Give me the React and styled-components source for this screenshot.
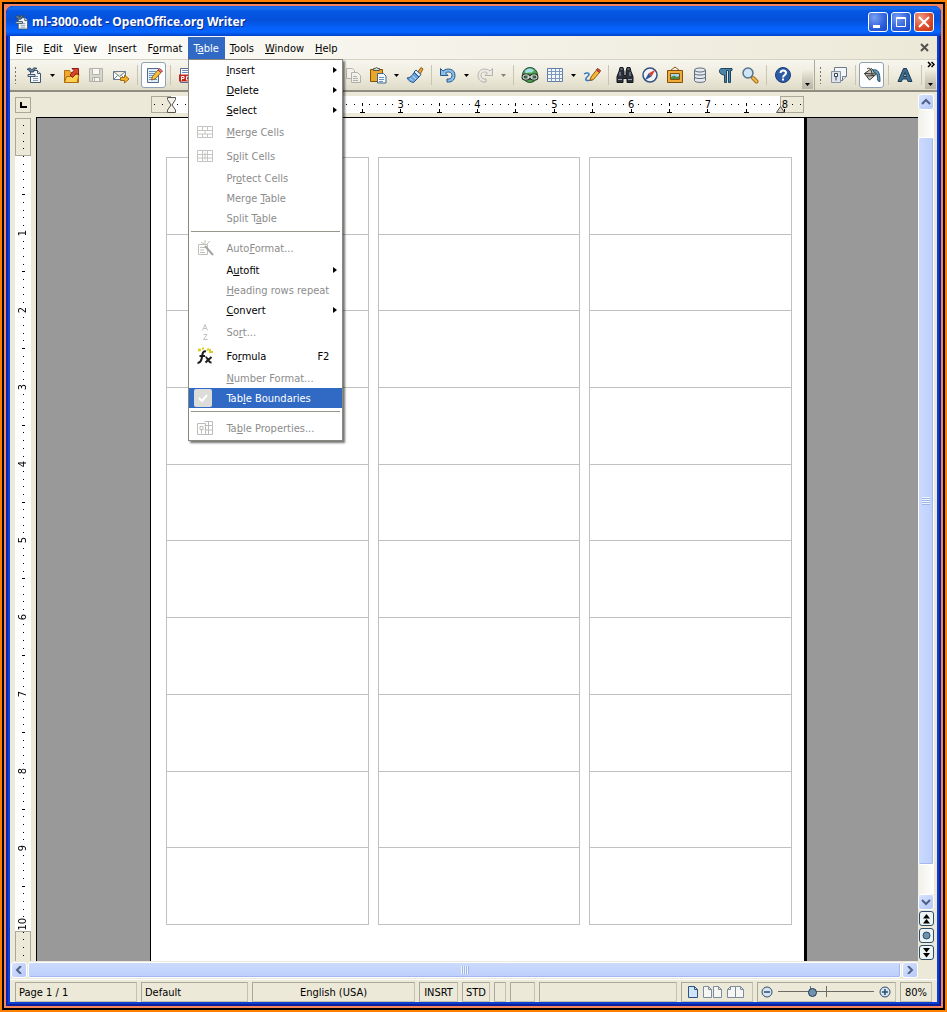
import React, { useState } from 'react'
import styled, { createGlobalStyle, css } from 'styled-components'

const UI_FONT = '"DejaVu Sans Condensed", "DejaVu Sans", sans-serif'
const FACE = '#ece9d8'
const LINE = '#aca899'

const GlobalStyle = createGlobalStyle`
    * { box-sizing: border-box; }
    body {
        margin: 0;
        background: #ff8000;
        font-family: ${UI_FONT};
        font-size: 11px;
        color: #000;
    }
    button, input { font: inherit; color: inherit; padding: 0; margin: 0; border: 0; background: none; }
    svg { display: block; }
`

// ---------- window frame ----------
const Frame = styled.div`
    height: 100vh;
    border: 2px solid #ff8000;
    background: #000;
    padding: 2px;
    display: flex;
`
const Desktop = styled.div`
    flex: 1;
    min-width: 0;
    padding: 2px;
    background: #f4845c;
    display: flex;
`
const Window = styled.div`
    flex: 1;
    min-width: 0;
    display: flex;
    flex-direction: column;
    background: #0a3fd0;
    border-radius: 7px 7px 0 0;
    padding: 0 4px 4px;
    box-shadow: inset 2px 0 #0a24b4, inset -2px 0 #0a1f9c, inset 0 -2px #0a1f9c;
`
const TitleBar = styled.header`
    height: 30px;
    flex: none;
    margin: 0 -4px;
    padding: 2px 7px 0 8px;
    border-radius: 7px 7px 0 0;
    display: flex;
    align-items: center;
    gap: 3px;
    background: linear-gradient(#0a5ae0 0, #1a70f0 2px, #0558e4 5px, #0450da 14px, #0560fa 22px, #0566ff 26px, #0440c8 30px);
`
const Title = styled.h1`
    flex: 1;
    margin: 0;
    font-family: "Noto Sans", "Open Sans", sans-serif;
    font-size: 12px;
    line-height: 16px;
    font-weight: bold;
    color: #fff;
    text-shadow: 1px 1px #0a2a8c;
    white-space: nowrap;
`
const CaptionButton = styled.button`
    width: 20px;
    height: 20px;
    border: 1px solid #fff;
    border-radius: 3px;
    background: ${(p) => p.$close
        ? 'radial-gradient(circle at 30% 25%, #ef9a80, #d8492a 60%, #b83414)'
        : 'radial-gradient(circle at 30% 25%, #7a9ff0, #2c60dc 60%, #1a48c0)'};
`

// ---------- menu bar ----------
const Client = styled.div`
    flex: 1;
    min-height: 0;
    display: flex;
    flex-direction: column;
    background: ${FACE};
`
const MenuBar = styled.nav`
    height: 24px;
    flex: none;
    padding: 1px 7px 0 1px;
    display: flex;
    background: linear-gradient(to right, #fdfdfb, #f4f2e8 50%, ${FACE});
    border-bottom: 1px solid #d6d2c2;
`
const MenuSlot = styled.div`
    position: relative;
    display: flex;
`
const MenuTitle = styled.button`
    height: 22px;
    padding: 0 6px 0 5px;
    white-space: nowrap;
    ${(p) => p.$open && css`
        background: #316ac5;
        color: #fff;
    `}
`
const CloseDoc = styled.button`
    margin-left: auto;
    width: 10px;
`
const Popup = styled.div`
    position: absolute;
    z-index: 5;
    top: 22px;
    left: 0;
    width: 155px;
    border: 1px solid #8a877c;
    background: #fff;
    box-shadow: 2px 2px 2px rgba(0, 0, 0, 0.55);
`
const PopupItem = styled.button`
    width: 100%;
    height: ${(p) => (p.$tall ? 24 : 20)}px;
    padding-right: 5px;
    display: grid;
    grid-template-columns: 37px 1fr auto;
    align-items: center;
    text-align: left;
    white-space: nowrap;
    color: ${(p) => (p.$off ? '#8c8c8c' : '#000')};
    ${(p) => p.$active && css`
        background: #316ac5;
        color: #fff;
    `}
`
const ItemIcon = styled.span`
    padding-left: 7px;
`
const CheckMark = styled.span`
    display: flex;
    align-items: center;
    justify-content: center;
    width: 18px;
    height: 18px;
    margin-left: 5px;
    border-radius: 2px;
    background: #dcdcd8;
`
const Shortcut = styled.span`
    padding-right: 8px;
`
const PopupRule = styled.hr`
    height: 8px;
    margin: 0 2px;
    border: 0;
    background: linear-gradient(#98968a, #98968a) 0 3px / 100% 1px no-repeat;
`

// ---------- toolbars ----------
const ToolBars = styled.div`
    height: 32px;
    flex: none;
    display: flex;
    border-bottom: 2px solid #8f8c80;
    background: linear-gradient(#f7f6ef, #efecde 50%, #dfdbc8);
`
const ToolBar = styled.div`
    display: flex;
    align-items: center;
    flex: ${(p) => (p.$grow ? '1 0 auto' : 'none')};
    border-left: ${(p) => (p.$edge ? `1px solid ${LINE}` : '0')};
`
const Grip = styled.span`
    width: 11px;
    height: 18px;
    background: radial-gradient(circle, #77746a 1px, transparent 1px) 4px 0 / 3px 4px repeat-y;
`
const ToolButton = styled.button`
    width: 25px;
    height: 26px;
    display: flex;
    align-items: center;
    justify-content: center;
    ${(p) => p.$on && css`
        border: 1px solid #8fa3b4;
        border-radius: 3px;
        background: #fff;
    `}
    ${(p) => p.$off && css`
        opacity: 0.6;
        filter: grayscale(1);
    `}
`
const DropButton = styled.button`
    width: 12px;
    height: 26px;
    display: flex;
    align-items: center;
    justify-content: center;
    opacity: ${(p) => (p.$off ? 0.45 : 1)};
`
const Divider = styled.span`
    width: 8px;
    height: 20px;
    background: linear-gradient(#c9c5b4, #c9c5b4) center / 1px 100% no-repeat;
`
const Covered = styled.span`
    width: 141px;
`
const Overflow = styled.button`
    width: 11px;
    height: 28px;
    margin: 0 1px 0 auto;
    padding-bottom: 3px;
    display: flex;
    flex-direction: column;
    align-items: center;
    justify-content: ${(p) => (p.$more ? 'space-between' : 'flex-end')};
    background: linear-gradient(transparent 30%, #b9b6a8);
`

// ---------- rulers and page ----------
const Workspace = styled.div`
    flex: 1;
    min-height: 0;
    display: flex;
`
const Editor = styled.main`
    flex: 1;
    min-width: 0;
    display: flex;
    flex-direction: column;
`
const RulerRow = styled.div`
    height: 25px;
    flex: none;
    display: flex;
    align-items: center;
    padding-left: 5px;
`
const TabButton = styled.button`
    width: 16px;
    height: 16px;
    margin-right: 6px;
    display: flex;
    align-items: center;
    justify-content: center;
    border: 1px solid ${LINE};
`
const RulerCenter = styled.div`
    flex: 1;
    display: flex;
    justify-content: center;
`
const HRuler = styled.div`
    position: relative;
    width: 653px;
    height: 17px;
    display: grid;
    grid-template-columns: repeat(85, 1fr);
    background: linear-gradient(to right, transparent 20px, #fff 20px, #fff calc(100% - 24px), transparent 0);
`
const VRulerBox = styled.div`
    width: 26px;
    flex: none;
    padding: 1px 0 0 5px;
    overflow: hidden;
`
const VRuler = styled.div`
    position: relative;
    width: 16px;
    height: 841px;
    padding-top: 4px;
    display: grid;
    grid-template-rows: repeat(109, 1fr);
    background: linear-gradient(transparent 38px, #fff 38px, #fff 813px, transparent 0);
`
const Margin = styled.span`
    position: absolute;
    border: 1px solid ${LINE};
    ${(p) => p.$side === 'left' && 'left: 0; top: 0; bottom: 0; width: 20px;'}
    ${(p) => p.$side === 'right' && 'right: 0; top: 0; bottom: 0; width: 24px;'}
    ${(p) => p.$side === 'top' && 'left: 0; right: 0; top: 0; height: 38px;'}
    ${(p) => p.$side === 'bottom' && 'left: 0; right: 0; top: 813px; bottom: -10px;'}
`
const Indent = styled.span`
    position: absolute;
    bottom: 0;
    ${(p) => (p.$right ? 'right: 19px' : 'left: 15px')};
`
const Tick = styled.span`
    min-width: 0;
    min-height: 0;
    display: flex;
    align-items: center;
    justify-content: center;
    line-height: 14px;
    ${(p) => p.$tab && css`
        background:
            linear-gradient(#000, #000) center bottom / 5px 1px no-repeat,
            linear-gradient(#000, #000) center bottom / 1px 4px no-repeat;
    `}
    &::before {
        content: ${(p) => (p.$label ? 'none' : '""')};
        width: ${(p) => (p.$half && p.$vertical ? 3 : 1)}px;
        height: ${(p) => (p.$half && !p.$vertical ? 3 : 1)}px;
        background: #000;
    }
`
const VLabel = styled.span`
    writing-mode: vertical-rl;
    transform: rotate(180deg);
`
const Body = styled.div`
    flex: 1;
    min-height: 0;
    display: flex;
`
const Canvas = styled.div`
    flex: 1;
    min-width: 0;
    display: flex;
    justify-content: center;
    overflow: hidden;
    border: solid #000;
    border-width: 1px 0 0 1px;
    background: #999;
`
const Page = styled.article`
    width: 653px;
    flex: none;
    padding: 39px 12px 0 15px;
    background: #fff;
    box-shadow: -1px 0 #000, 3px 0 #000;
`
const LabelSheet = styled.div`
    height: 768px;
    display: grid;
    grid-template-columns: repeat(3, 1fr);
    gap: 9px;
`
const LabelColumn = styled.div`
    display: grid;
    grid-template-rows: repeat(10, 1fr);
    border: solid #c0c0c0;
    border-width: 1px 1px 0;
`
const LabelCell = styled.div`
    border-bottom: 1px solid #c0c0c0;
`

// ---------- scroll bars ----------
const VScroll = styled.div`
    width: 19px;
    flex: none;
    padding: 2px 3px 0 0;
    display: flex;
    flex-direction: column;
`
const ScrollButton = styled.button`
    width: 16px;
    height: 16px;
    flex: none;
    display: flex;
    align-items: center;
    justify-content: center;
    border: 1px solid #fff;
    border-radius: 3px;
    background: linear-gradient(135deg, #d6e2fe, #b6c8f8);
`
const PageButton = styled.button`
    width: 15px;
    height: 15px;
    margin: 1px 0 1px 1px;
    flex: none;
    display: flex;
    align-items: center;
    justify-content: center;
    border: 1px solid #2c4c6c;
    border-radius: 3px;
    background: #eef3f4;
`
const VTrough = styled.div`
    flex: 1;
    padding: 27px 0 29px;
    display: flex;
    background: linear-gradient(to right, #f1f0ea, #fefefc);
`
const HTrough = styled.div`
    flex: 1;
    display: flex;
    padding: 0 1px;
`
const Thumb = styled.div`
    flex: 1;
    display: flex;
    align-items: center;
    justify-content: center;
    border: 1px solid #fff;
    border-radius: 2px;
    box-shadow: inset -1px -1px #a3b8ee;
    background: linear-gradient(${(p) => (p.$vertical ? 'to right' : 'to bottom')}, #cbdafe, #bccffb);
`
const Ridges = styled.span`
    width: 8px;
    height: 8px;
    background: repeating-linear-gradient(${(p) => (p.$vertical ? 'to bottom' : 'to right')}, #eef4fe 0 1px, #a0b6e8 1px 2px);
`
const HScroll = styled.div`
    height: 18px;
    flex: none;
    padding: 1px 19px 1px 1px;
    display: flex;
`

// ---------- status bar ----------
const StatusBar = styled.footer`
    height: 23px;
    flex: none;
    border-top: 1px solid #fff;
    padding: 2px 5px 1px;
    display: flex;
    gap: 4px;
`
const StatusCell = styled.div`
    flex: ${(p) => (p.$grow ? '1 1' : '0 0')} ${(p) => p.$w}px;
    min-width: 0;
    height: 20px;
    padding: ${(p) => (p.$center ? 0 : '0 4px 0 3px')};
    display: flex;
    align-items: center;
    justify-content: ${(p) => (p.$center ? 'center' : 'flex-start')};
    gap: 5px;
    white-space: nowrap;
    border: 1px solid ${LINE};
    border-right-color: #c5c1b0;
    border-bottom-color: #c5c1b0;
`
const ViewButton = styled.button`
    flex: none;
`
const ZoomSlider = styled.input`
    appearance: none;
    flex: 1;
    min-width: 0;
    height: 14px;
    background:
        linear-gradient(#6c6c64, #6c6c64) 50% 1px / 1px 11px no-repeat,
        linear-gradient(#6c6c64, #6c6c64) 34% 1px / 1px 5px no-repeat,
        linear-gradient(#6c6c64, #6c6c64) 0 6px / 100% 1px no-repeat;
    &::-webkit-slider-thumb {
        appearance: none;
        width: 9px;
        height: 9px;
        border: 1px solid #1c3a58;
        border-radius: 50%;
        background: #6f93ad;
    }
`

// ---------- icons ----------
const ICONS = {
    newDoc: (
        <g stroke="#3f566b">
            <path fill="#f4f8fc" d="M5.500 4.500h7l3 3v9h-10z" />
            <path fill="#dce6ee" d="M12.500 4.500v3h3" />
            <path stroke="#8c9cac" d="M8 10.500h5M8 12.500h5M8 14.500h5" />
            <path fill="#d4e0ea" d="M3 8.500h7v2h-7z" />
            <path fill="#5f7f9c" stroke="#34485c" d="M2 3.500c2-2 4-1.500 5 .5 1-2.500 3-2.500 5-1.500-2 0-3 1.500-3.500 3.500H5c-.5-1.500-1.500-2.500-3-2.500z" />
        </g>
    ),
    open: (
        <g stroke="#b06c10">
            <path fill="#f3a82c" d="M2.500 4.500h5l1 2h8v10h-14z" />
            <path fill="#fbd050" d="M2.500 16.500l2-6h6l2-2h4.500l-2 8z" />
            <path fill="#d8452c" stroke="#8c2010" d="M8 9l4-4.500-2-2h6.500v6.500l-2-2-4 4.500z" />
        </g>
    ),
    save: (
        <g stroke="#8b8b85">
            <path fill="#c9c9c4" d="M2.500 2.500h13v13h-13z" />
            <path fill="#fff" d="M5.500 2.500h7v6h-7zM5.500 11.500h7v4h-7z" />
            <path d="M7.500 12v3" />
        </g>
    ),
    mail: (
        <g>
            <path fill="#fff" stroke="#6c7c8c" d="M1.500 5.500h12v8h-12zM1.500 5.500l6 5 6-5M1.500 13.500l4-4M13.500 13.500l-4-4" />
            <path fill="#f5b32c" stroke="#a46c10" d="M8.500 11.500h4v-2.500l4.500 4-4.500 4v-2.500h-4z" />
        </g>
    ),
    edit: (
        <g>
            <path fill="#e3eefa" stroke="#4c6c94" d="M2.500 2.500h11v14h-11z" />
            <path stroke="#6c94bc" d="M4 5.500h7M4 7.500h6M4 9.500h5M4 11.500h4M4 13.500h8" />
            <path fill="#f7c240" stroke="#96641c" d="M13 4l3 2.500-6 6.500-3.500 1 1-3.500z" />
            <path fill="#e87c84" stroke="#a43c3c" d="M13 4l1.500-1.500 3 2.500-1.500 1.500z" />
        </g>
    ),
    pdf: (
        <g>
            <path fill="#fff" stroke="#5c6c8c" d="M2.500 2.500h9l4 4v10h-13z" />
            <path stroke="#6c8cbc" d="M4 4.500h6M4 6.500h8" />
            <path fill="#c4281c" d="M1 8.500h16v7H1z" />
            <path stroke="#fff" fill="none" d="M3.500 14.500v-4h2.500v2h-2.500M8.500 10.500v3.500h2v-3zM13.500 14.500v-4h2.500M13.500 12.500h2" />
        </g>
    ),
    copy: (
        <g fill="#f4f4f0" stroke="#8c8c88">
            <path d="M2.500 2.500h6l2 2v8h-8z" />
            <path d="M7.500 6.500h6l3 3v7h-9z" />
            <path d="M9 10.500h4M9 12.500h5M9 14.500h5" />
        </g>
    ),
    paste: (
        <g>
            <path fill="#eaa628" stroke="#84500c" d="M1.500 3.500h12v12h-12z" />
            <path fill="#d8d8d0" stroke="#54544c" d="M4.500 4.500h6v-2h-1.500l-1.500-1-1.500 1h-1.500z" />
            <path fill="#f4f8fc" stroke="#44688c" d="M8.500 7.500h6l2.500 2.500v7h-8.500z" />
            <path stroke="#6c94bc" d="M10 11.500h5M10 13.500h5M10 15.500h4" />
        </g>
    ),
    brush: (
        <g>
            <path fill="#f3a638" stroke="#90580c" d="M11.500 6.500l3.500-5 2 1.500-3 5.500z" />
            <path fill="#6ca4e0" stroke="#24548c" d="M8 6.500l5 4.500-5.500 5.500c-3-.5-5-2-6.500-4.500 3 0 5-2 7-5.500z" />
            <path stroke="#cce4fa" d="M4 12.500l2.500 2M6.500 10l3.500 3" />
            <path fill="#d8ecfc" stroke="#24548c" d="M8 6l2-2 5 4.500-2 2.500z" />
        </g>
    ),
    undo: (
        <path fill="#8cbce8" stroke="#24588c" d="M1.500 2.500l2.500 2.500c4-3.500 12-2.500 12 4.500 0 5-4 7-8 6.500v-3c3 .5 5-1 5-3.500 0-4-4.500-4-6.500-2.500l2.500 2.500h-7.500z" />
    ),
    redo: (
        <path fill="#e8e8e4" stroke="#8c8c88" d="M16.500 2.500l-2.500 2.500c-4-3.500-12-2.500-12 4.500 0 5 4 7 8 6.500v-3c-3 .5-5-1-5-3.500 0-4 4.500-4 6.500-2.500l-2.500 2.500h7.500z" />
    ),
    globe: (
        <g>
            <circle cx="9" cy="9" r="7.500" fill="#4fa848" stroke="#1f4c3c" />
            <path fill="#a4dcf0" d="M4 5c2-3 6-3.500 9-1l-2 2.500H7L5 8z" />
            <rect x="2" y="9" width="6" height="4" rx="2" stroke="#24342c" strokeWidth="3" />
            <rect x="10" y="9" width="6" height="4" rx="2" stroke="#24342c" strokeWidth="3" />
            <rect x="2" y="9" width="6" height="4" rx="2" stroke="#f0f4f0" />
            <rect x="10" y="9" width="6" height="4" rx="2" stroke="#f0f4f0" />
            <path stroke="#f0f4f0" d="M6 11h6" />
        </g>
    ),
    table: (
        <g stroke="#7c98bc">
            <path fill="#f4f8fd" stroke="#5c7ca4" d="M1.500 2.500h15v13h-15z" />
            <path d="M1.500 5.500h15M1.500 8.500h15M1.500 12.500h15M5.500 2.500v13M9.500 2.500v13M13.500 2.500v13" />
        </g>
    ),
    draw: (
        <g>
            <path fill="none" stroke="#3474c4" strokeWidth="1.500" d="M1 8c3-2 7-1 4 2-3 2.500-3 4.500 0 4.500 2 0 3-1 4.500-.5" />
            <path fill="#f7b838" stroke="#905c14" d="M13.500 4l3 2.500-6 7-3.500 1 1-3.500z" />
            <path fill="#e0584c" stroke="#90281c" d="M13.500 4l1-1.500 3 2-1 2z" />
        </g>
    ),
    binoculars: (
        <g fill="#2c3038" stroke="#14181c">
            <path d="M3 5.500l1-4h3l1 4v4h2v-4l1-4h3l1 4 2 5v6h-6v-4H7v4H1v-6z" />
            <path stroke="#94a4b8" d="M4 6v4M14 6v4M2 13.500h4M12 13.500h4M4.500 3h2M11.500 3h2" />
        </g>
    ),
    compass: (
        <g>
            <circle cx="9" cy="9" r="7" fill="#f0f4fa" stroke="#34507c" strokeWidth="1.500" />
            <path fill="#d8402c" d="M14.500 3.500l-4 7-3-3z" />
            <path fill="#2c5490" d="M3.500 14.500l4-7 3 3z" />
        </g>
    ),
    gallery: (
        <g>
            <path stroke="#8c5c14" fill="none" d="M5 4l4-3 4 3" />
            <path fill="#f0ac38" stroke="#84500c" d="M1.500 4.500h15v12h-15z" />
            <path fill="#a8d8f0" stroke="#84500c" d="M4.500 7.500h9v6h-9z" />
            <path fill="#4c8c4c" d="M5 13v-2l3-1.500 3 1.500 2-1v3z" />
        </g>
    ),
    database: (
        <g fill="#e6eaee" stroke="#5c6c7c">
            <path d="M3.500 4v10.500c0 2.500 11 2.500 11 0V4" />
            <path fill="none" d="M3.500 7.500c0 2 11 2 11 0M3.500 11c0 2 11 2 11 0" />
            <ellipse cx="9" cy="4" rx="5.500" ry="2" />
        </g>
    ),
    pilcrow: (
        <path fill="#4c84a8" stroke="#1c4464" d="M6 2.500h10v2h-1.500v12h-2v-12h-2v12h-2v-7.500c-6 0-6.500-6.500-2.500-6.500z" />
    ),
    zoom: (
        <g>
            <path stroke="#a4701c" strokeWidth="4" strokeLinecap="round" d="M12 12l3.500 3.500" />
            <path stroke="#f3bc4c" strokeWidth="2" strokeLinecap="round" d="M12 12l3.500 3.500" />
            <circle cx="7" cy="7" r="5" fill="#cfe4f4" stroke="#54748c" strokeWidth="1.500" />
        </g>
    ),
    help: (
        <g>
            <circle cx="9" cy="9" r="7.500" fill="#2c5ca8" stroke="#1c3c70" />
            <path fill="none" stroke="#fff" strokeWidth="2" d="M6.500 7c0-3.500 5.500-3 5.500 0 0 2-3 2-3 4.500M9 12.500v2" />
        </g>
    ),
    styles: (
        <g>
            <path fill="#f4f6f8" stroke="#6c7c8c" d="M4.500 1.500h12v9l-4 4h-8z" />
            <path stroke="#6c7c8c" fill="#dce2e8" d="M12.500 14.500v-4h4" />
            <path fill="#e0e4ea" stroke="#8494a4" d="M1.500 5.500h9v11h-9z" />
            <path fill="#fff" stroke="#34485c" d="M4.500 7.500h3v3h-3zM6 10.500v4" />
        </g>
    ),
    bucket: (
        <g>
            <path fill="#c4c4bc" stroke="#34342c" d="M1.500 7.500l7-5 5 5.500-7 6z" />
            <path fill="none" stroke="#34342c" d="M4 3c2-2 5 0 5 6M1.500 7.500l11 .5M4 10l7-.5" />
            <path fill="#5c94b4" stroke="#245070" d="M10 4c5-1 7 2 7 11.500-2 0-2.500-1-2.500-3 0-4-1-5.500-3.500-6z" />
        </g>
    ),
    fontColor: (
        <path fill="#3c6c90" fillRule="evenodd" stroke="#1c3c54" d="M7.500 2.500h3l5.500 13h-4l-1-2.500h-4.500l-1 2.500h-3.500zM9 6.500l-1.500 4h3z" />
    ),
    mergeCells: (
        <g fill="none" stroke="#c4c4c0">
            <path d="M1.500 3.500h15v11h-15zM1.500 7.500h15M1.500 11h15M6.500 3.500v4M11.500 3.500v4M6.500 11v3.500M11.500 11v3.500M9 7.500v3.500" />
        </g>
    ),
    splitCells: (
        <g fill="none" stroke="#c4c4c0">
            <path d="M1.500 3.500h15v11h-15zM1.500 7.500h15M1.500 11h15M6.500 3.500v11M11.500 3.500v11M9 5.500v7" />
        </g>
    ),
    autoFormat: (
        <g fill="none" stroke="#c0c0bc">
            <path d="M2.500 5.500h9v10h-9zM4 8.500h5M4 11h4M4 13.500h5M9 1v4M5 3l3 2M14 2l-3 3" />
            <path stroke="#a4a4a0" strokeWidth="2" d="M9 7l8 9" />
        </g>
    ),
    sort: (
        <g fill="none" stroke="#c0c0bc">
            <path d="M6.500 7.500l2.500-6 2.500 6M7.500 5.500h3M7.500 11.500h3.500l-3.500 5h4" />
        </g>
    ),
    formula: (
        <g fill="none" stroke="#1c1c1c" strokeWidth="2">
            <path stroke="#d8d020" d="M2 3h3M3.500 1.500v3M6 1.500h2M11 3l2-1M14 2v3M13 5h4" />
            <path d="M10 4.500c-3-1-3.500 2-4 5.500S4 16.500 1.500 15.500M3.500 9h5.500M9.500 10c2 0 3 6 6 5.500M15.500 10l-6 5.500" />
        </g>
    ),
    tableProps: (
        <g fill="none" stroke="#bcbcb8">
            <path d="M8.500 2.500h8v13h-8M8.500 6.500h8M8.500 11h8M12.500 2.500v13M1.500 4.500h8v11h-8zM4 7.500h3v3h-3zM5.500 10.500v4" />
        </g>
    ),
}

function Icon({ name }) {
    return (
        <svg width="18" height="18" viewBox="0 0 18 18" fill="none" aria-hidden="true">
            {ICONS[name]}
        </svg>
    )
}

const CHEVRONS = {
    up: 'M1 6l4-4 4 4',
    down: 'M1 2l4 4 4-4',
    left: 'M7 0L3 4l4 4',
    right: 'M3 0l4 4-4 4',
}

function Chevron({ dir }) {
    return (
        <svg width="10" height="8" viewBox="0 0 10 8">
            <path d={CHEVRONS[dir]} fill="none" stroke="#4d6185" strokeWidth="2" />
        </svg>
    )
}

function DownArrow() {
    return <svg width="5" height="3" viewBox="0 0 5 3"><path d="M0 0h5L2.500 3z" /></svg>
}

// the letter after "&" is the underlined access key
function Mnemonic({ text }) {
    const at = text.indexOf('&')
    if (at < 0) return text
    return <>{text.slice(0, at)}<u>{text[at + 1]}</u>{text.slice(at + 2)}</>
}

const MENUS = ['&File', '&Edit', '&View', '&Insert', 'F&ormat', 'T&able', '&Tools', '&Window', '&Help']

const TABLE_MENU = [
    { label: '&Insert', sub: true },
    { label: '&Delete', sub: true },
    { label: '&Select', sub: true },
    { label: '&Merge Cells', icon: 'mergeCells', off: true },
    { label: 'S&plit Cells', icon: 'splitCells', off: true },
    { label: 'Pr&otect Cells', off: true },
    { label: 'Merge &Table', off: true },
    { label: 'Split T&able', off: true },
    null,
    { label: 'Auto&Format...', icon: 'autoFormat', off: true },
    { label: 'A&utofit', sub: true },
    { label: '&Heading rows repeat', off: true },
    { label: '&Convert', sub: true },
    { label: 'So&rt...', icon: 'sort', off: true },
    { label: 'Fo&rmula', icon: 'formula', keys: 'F2' },
    { label: '&Number Format...', off: true },
    { label: 'Tab&le Boundaries', checked: true },
    null,
    { label: 'Ta&ble Properties...', icon: 'tableProps', off: true },
]

function TableMenu() {
    return (
        <Popup role="menu">
            {TABLE_MENU.map((item, key) => item === null ? <PopupRule key={key} /> : (
                <PopupItem key={key} role="menuitem" $tall={!!item.icon} $off={item.off} $active={item.checked}>
                    {item.checked ? (
                        <CheckMark>
                            <svg width="10" height="9" viewBox="0 0 10 9"><path d="M1 4l3 3 5-6" fill="none" stroke="#fff" strokeWidth="2" /></svg>
                        </CheckMark>
                    ) : <ItemIcon>{item.icon && <Icon name={item.icon} />}</ItemIcon>}
                    <span><Mnemonic text={item.label} /></span>
                    {item.sub && <svg width="4" height="6" viewBox="0 0 4 6"><path d="M0 0l4 3-4 3z" /></svg>}
                    {item.keys && <Shortcut>{item.keys}</Shortcut>}
                </PopupItem>
            ))}
        </Popup>
    )
}

const STANDARD_TOOLS = [
    'newDoc', 'v', 'open', 'save:off', 'mail', '|', 'edit:on', '|', 'pdf', 'gap', 'copy:off', 'paste', 'v', 'brush', '|',
    'undo', 'v', 'redo:off', 'v:off', '|', 'globe', 'table', 'v', 'draw', '|',
    'binoculars', 'compass', 'gallery', 'database', 'pilcrow', 'zoom', '|', 'help',
]
const EXTRA_TOOLS = ['styles', '|', 'bucket:on', '|', 'fontColor', '|']

function Tools({ items }) {
    return items.map((item, key) => {
        const [name, state] = item.split(':')
        if (name === '|') return <Divider key={key} />
        if (name === 'gap') return <Covered key={key} />
        if (name === 'v') return <DropButton key={key} aria-label="More" $off={state === 'off'}><DownArrow /></DropButton>
        return (
            <ToolButton key={key} aria-label={name} $on={state === 'on'} $off={state === 'off'}>
                <Icon name={name} />
            </ToolButton>
        )
    })
}

function ticks(from, count, vertical) {
    return Array.from({ length: count }, (_, i) => {
        const tenth = from + i
        const label = tenth > 0 && tenth % 10 === 0 ? tenth / 10 : null
        const half = tenth > 0 && tenth % 5 === 0
        return (
            <Tick key={tenth} $label={label !== null} $half={half} $vertical={vertical} $tab={!vertical && half}>
                {label !== null && (vertical ? <VLabel>{label}</VLabel> : label)}
            </Tick>
        )
    })
}

const VIEWS = {
    single: 'M.5.5h6l3 3v8h-9zM6.500.5v3h3',
    multi: 'M.5.5h5l3 3v8h-8zM5.500.5v3h3M10.500.5h5l3 3v8h-8zM15.500.5v3h3',
    book: 'M3.500.5h5v11h-8v-8zM3.500.5v3h-3M8.500.5h5l3 3v8h-8zM13.500.5v3h3',
}

function ViewIcon({ view }) {
    const on = view === 'single'
    return (
        <svg width={on ? 10 : 19} height="12" fill={on ? '#cfe4f8' : '#f6f6f2'} stroke={on ? '#2c5480' : '#7c8c9c'}>
            <path d={VIEWS[view]} />
        </svg>
    )
}

function ZoomSign({ plus }) {
    return (
        <svg width="12" height="12" viewBox="0 0 12 12" fill="none" stroke="#2c4c6c">
            <circle cx="6" cy="6" r="5" fill="#d4e4f0" />
            <path strokeWidth="1.500" d={plus ? 'M3 6h6M6 3v6' : 'M3 6h6'} />
        </svg>
    )
}

export default function App() {
    const [openMenu, setOpenMenu] = useState('T&able')
    const [zoom, setZoom] = useState(35)

    return (
        <>
            <GlobalStyle />
            <Frame>
                <Desktop>
                    <Window>
                        <TitleBar>
                            <svg width="15" height="16" viewBox="1 1 16 16" fill="none">{ICONS.newDoc}</svg>
                            <Title>ml-3000.odt - OpenOffice.org Writer</Title>
                            <CaptionButton aria-label="Minimize">
                                <svg width="18" height="18"><path d="M4 12h7v3H4z" fill="#fff" /></svg>
                            </CaptionButton>
                            <CaptionButton aria-label="Maximize">
                                <svg width="18" height="18"><path d="M4.500 4.500h9v9h-9zM4 5.500h10" fill="none" stroke="#fff" /></svg>
                            </CaptionButton>
                            <CaptionButton aria-label="Close" $close>
                                <svg width="18" height="18"><path d="M4 4l10 10M14 4L4 14" stroke="#fff" strokeWidth="2" /></svg>
                            </CaptionButton>
                        </TitleBar>
                        <Client>
                            <MenuBar>
                                {MENUS.map((menu) => (
                                    <MenuSlot key={menu}>
                                        <MenuTitle $open={openMenu === menu} onClick={() => setOpenMenu(menu)}>
                                            <Mnemonic text={menu} />
                                        </MenuTitle>
                                        {menu === 'T&able' && openMenu === menu && <TableMenu />}
                                    </MenuSlot>
                                ))}
                                <CloseDoc aria-label="Close document">
                                    <svg width="10" height="10"><path d="M1 1l7 7M8 1L1 8" stroke="#55534c" strokeWidth="2" /></svg>
                                </CloseDoc>
                            </MenuBar>
                            <ToolBars>
                                <ToolBar $grow>
                                    <Grip />
                                    <Tools items={STANDARD_TOOLS} />
                                    <Overflow aria-label="Toolbar options"><DownArrow /></Overflow>
                                </ToolBar>
                                <ToolBar $edge>
                                    <Grip />
                                    <Tools items={EXTRA_TOOLS} />
                                    <Overflow $more aria-label="Toolbar options">
                                        <svg width="8" height="7" viewBox="0 0 8 7"><path d="M1 1l2.500 2.500L1 6M4.500 1L7 3.500 4.500 6" fill="none" stroke="#000" strokeWidth="1.500" /></svg>
                                        <DownArrow />
                                    </Overflow>
                                </ToolBar>
                            </ToolBars>
                            <Workspace>
                                <Editor>
                                    <RulerRow>
                                        <TabButton aria-label="Tab type">
                                            <svg width="7" height="6"><path d="M0 0h2v4h5v2H0z" /></svg>
                                        </TabButton>
                                        <RulerCenter>
                                            <HRuler>
                                                <Margin $side="left" />
                                                <Margin $side="right" />
                                                {ticks(-2, 85, false)}
                                                <Indent>
                                                    <svg width="11" height="16" viewBox="0 0 11 16"><path d="M1.500.5h8v2l-3.500 5.500 3.500 5v2.500h-8v-2.500l3.500-5-3.500-5.500z" fill="#f4f2e8" stroke="#55534c" /></svg>
                                                </Indent>
                                                <Indent $right>
                                                    <svg width="9" height="7"><path d="M4.500.5l4 6h-8z" fill="#d8d4c4" stroke="#55534c" /></svg>
                                                </Indent>
                                            </HRuler>
                                        </RulerCenter>
                                    </RulerRow>
                                    <Body>
                                        <VRulerBox>
                                            <VRuler>
                                                <Margin $side="top" />
                                                <Margin $side="bottom" />
                                                {ticks(-4, 109, true)}
                                            </VRuler>
                                        </VRulerBox>
                                        <Canvas>
                                            <Page>
                                                <LabelSheet>
                                                    {[0, 1, 2].map((col) => (
                                                        <LabelColumn key={col}>
                                                            {Array.from({ length: 10 }, (_, row) => <LabelCell key={row} />)}
                                                        </LabelColumn>
                                                    ))}
                                                </LabelSheet>
                                            </Page>
                                        </Canvas>
                                    </Body>
                                </Editor>
                                <VScroll>
                                    <ScrollButton aria-label="Scroll up"><Chevron dir="up" /></ScrollButton>
                                    <VTrough><Thumb $vertical><Ridges $vertical /></Thumb></VTrough>
                                    <ScrollButton aria-label="Scroll down"><Chevron dir="down" /></ScrollButton>
                                    <PageButton aria-label="Previous page">
                                        <svg width="9" height="10"><path d="M4.500 0L8 4.500H1zM4.500 5L8 9.500H1z" /></svg>
                                    </PageButton>
                                    <PageButton aria-label="Navigation">
                                        <svg width="9" height="9"><circle cx="4.500" cy="4.500" r="3.500" fill="#6f93ad" stroke="#2c4c6c" /></svg>
                                    </PageButton>
                                    <PageButton aria-label="Next page">
                                        <svg width="9" height="10"><path d="M4.500 4.500L8 0H1zM4.500 9.500L8 5H1z" /></svg>
                                    </PageButton>
                                </VScroll>
                            </Workspace>
                            <HScroll>
                                <ScrollButton aria-label="Scroll left"><Chevron dir="left" /></ScrollButton>
                                <HTrough><Thumb><Ridges /></Thumb></HTrough>
                                <ScrollButton aria-label="Scroll right"><Chevron dir="right" /></ScrollButton>
                            </HScroll>
                            <StatusBar>
                                <StatusCell $w={122}>Page 1 / 1</StatusCell>
                                <StatusCell $w={107}>Default</StatusCell>
                                <StatusCell $w={163} $center>English (USA)</StatusCell>
                                <StatusCell $w={39} $center>INSRT</StatusCell>
                                <StatusCell $w={28} $center>STD</StatusCell>
                                <StatusCell $w={12} />
                                <StatusCell $w={25} />
                                <StatusCell $w={138} $grow />
                                <StatusCell $w={72} $center>
                                    <ViewButton aria-label="Single page"><ViewIcon view="single" /></ViewButton>
                                    <ViewButton aria-label="Two pages"><ViewIcon view="multi" /></ViewButton>
                                    <ViewButton aria-label="Book"><ViewIcon view="book" /></ViewButton>
                                </StatusCell>
                                <StatusCell $w={139}>
                                    <button aria-label="Zoom out"><ZoomSign /></button>
                                    <ZoomSlider type="range" aria-label="Zoom" min="0" max="100" value={zoom} onChange={(e) => setZoom(Number(e.target.value))} />
                                    <button aria-label="Zoom in"><ZoomSign plus /></button>
                                </StatusCell>
                                <StatusCell $w={32} $center>80%</StatusCell>
                            </StatusBar>
                        </Client>
                    </Window>
                </Desktop>
            </Frame>
        </>
    )
}
